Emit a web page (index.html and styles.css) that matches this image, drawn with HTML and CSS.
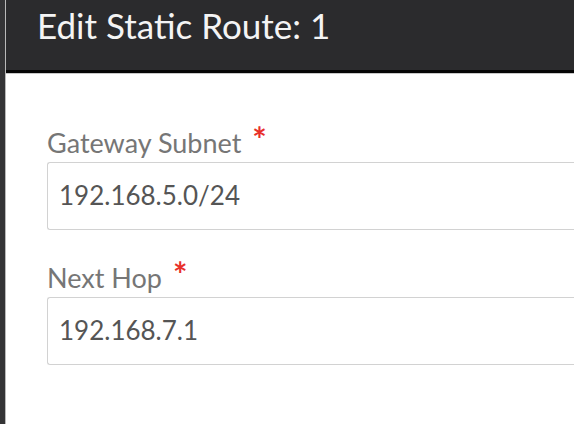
FILE: index.html
```html
<!DOCTYPE html>
<html>
<head>
<meta charset="utf-8">
<link rel="stylesheet" href="styles.css">
</head>
<body>
<div class="page">
  <div class="backdrop"></div>
  <div class="modal">
    <div class="modal-header">
      <h1 class="modal-title">Edit Static Route: 1</h1>
    </div>
    <div class="modal-body">
      <div class="field">
        <label class="field-label">Gateway Subnet <span class="req">*</span></label>
        <div class="field-input">192.168.5.0/24</div>
      </div>
      <div class="field">
        <label class="field-label">Next Hop <span class="req">*</span></label>
        <div class="field-input">192.168.7.1</div>
      </div>
    </div>
  </div>
</div>
</body>
</html>
```
FILE: styles.css
```css
html, body {
  margin: 0;
  padding: 0;
  width: 574px;
  height: 424px;
  overflow: hidden;
  background: #ffffff;
}
.page {
  display: flex;
  height: 424px;
}
.backdrop {
  width: 5px;
  flex: none;
  background: #343436;
}
.modal {
  flex: 1;
  display: flex;
  flex-direction: column;
  border-left: 1px solid #b9b9b9;
  background: #ffffff;
}
.modal-header {
  height: 73px;
  box-sizing: border-box;
  background: #2b2b2d;
  border-bottom: 3px solid #050505;
  box-shadow: 0 1px 0 #c8c8c8;
  padding: 4px 0 0 31px;
}
.modal-title {
  margin: 0;
  font-family: "Lato", "Open Sans", sans-serif;
  font-weight: 400;
  font-size: 35px;
  line-height: 42px;
  color: #f4f4f4;
}
.modal-body {
  padding: 50px 0 0 41px;
  display: flex;
  flex-direction: column;
  gap: 28px;
}
.field {
  display: flex;
  flex-direction: column;
  gap: 3px;
}
.field-label {
  font-family: "Lato", "Open Sans", sans-serif;
  font-size: 27px;
  line-height: 32px;
  color: #767676;
}
.req {
  color: #e8302a;
  font-weight: 700;
  font-size: 34px;
  margin-left: 4px;
  vertical-align: 1px;
}
.field-input {
  height: 68px;
  border: 1px solid #d2d2d2;
  border-right: none;
  border-radius: 3px 0 0 3px;
  box-sizing: border-box;
  display: flex;
  align-items: center;
  padding: 0 0 3px 11px;
  font-family: "Lato", "Open Sans", sans-serif;
  font-size: 26px;
  color: #555555;
}
```
